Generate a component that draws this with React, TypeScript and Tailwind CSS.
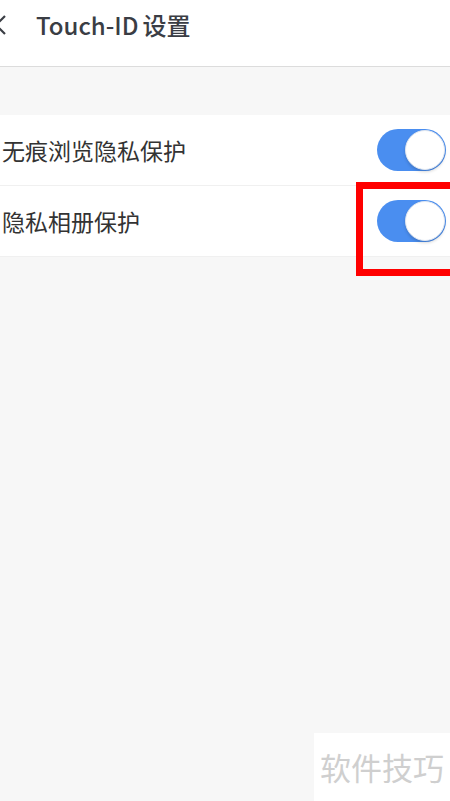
import React, { useState } from 'react';

const font = { fontFamily: '"Noto Sans CJK SC", "Noto Sans", sans-serif' };

function Toggle({ on, onChange }: { on: boolean; onChange: () => void }) {
  return (
    <button
      onClick={onChange}
      className={`relative h-[42px] w-[69px] shrink-0 rounded-full ${on ? 'bg-[#4a8ef0]' : 'bg-[#e5e5e5]'}`}
    >
      <span
        className={`absolute top-[1px] h-[40px] w-[40px] rounded-full border border-[#dfe6f0] bg-white shadow-[0_2px_3px_rgba(0,0,0,0.15)] ${on ? 'right-[1px]' : 'left-[1px]'}`}
      />
    </button>
  );
}

export default function App() {
  const [incognito, setIncognito] = useState(true);
  const [album, setAlbum] = useState(true);

  return (
    <div className="relative h-[801px] w-[450px] overflow-hidden bg-[#f7f7f7]" style={font}>
      <div className="flex h-[67px] items-center border-b border-[#dcdcdc] bg-white">
        <svg className="ml-[-7px] mt-[-16px] h-[22px] w-[14px]" viewBox="0 0 14 22" fill="none">
          <path d="M12 2 L3 11 L12 20" stroke="#3b3e45" strokeWidth="2.2" />
        </svg>
        <span className="ml-[29px] mt-[-16px] text-[24px] font-medium text-[#3a3d44]">
          Touch-ID<span className="ml-[4px]">设置</span>
        </span>
      </div>

      <div className="mt-[48px] bg-white">
        <div className="flex h-[71px] items-center justify-between border-b border-[#f0f0f0] pr-[4px]">
          <span className="ml-[2px] text-[23px] text-[#333]">无痕浏览隐私保护</span>
          <Toggle on={incognito} onChange={() => setIncognito(!incognito)} />
        </div>
        <div className="relative flex h-[71px] items-center justify-between border-b border-[#f0f0f0] pr-[4px]">
          <span className="ml-[2px] text-[23px] text-[#333]">隐私相册保护</span>
          <Toggle on={album} onChange={() => setAlbum(!album)} />
          <div className="pointer-events-none absolute left-[356px] top-[-4px] h-[94px] w-[110px] border-[7px] border-[#ff0000]" />
        </div>
      </div>

      <div className="absolute bottom-0 right-0 flex h-[68px] w-[136px] items-center justify-center bg-white">
        <span className="text-[31px] text-[#cfcfcf]">软件技巧</span>
      </div>
    </div>
  );
}
